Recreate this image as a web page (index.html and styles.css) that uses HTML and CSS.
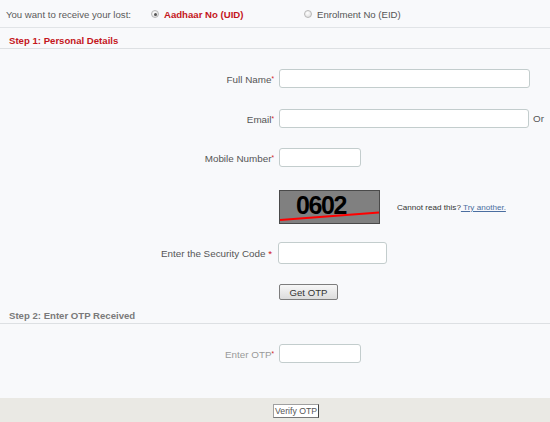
FILE: index.html
```html
<!DOCTYPE html>
<html>
<head>
<meta charset="utf-8">
<link rel="stylesheet" href="styles.css">
</head>
<body>
<div class="topbar">
  <span class="question">You want to receive your lost:</span>
  <span class="option opt-uid"><span class="radio checked"></span><span class="opt-active">Aadhaar No (UID)</span></span>
  <span class="option opt-eid"><span class="radio"></span><span class="opt-text">Enrolment No (EID)</span></span>
</div>

<div class="step step1">Step 1: Personal Details</div>

<div class="form">
  <div class="row r-name">
    <label class="lbl">Full Name<span class="req">*</span></label>
    <input class="field wide" type="text">
  </div>
  <div class="row r-email">
    <label class="lbl">Email<span class="req">*</span></label>
    <div class="with-or"><input class="field wide2" type="text"><span class="or">Or</span></div>
  </div>
  <div class="row r-mobile">
    <label class="lbl">Mobile Number<span class="req">*</span></label>
    <input class="field short" type="text">
  </div>
  <div class="row r-captcha">
    <span></span>
    <div class="captcha-wrap">
      <svg class="captcha" width="101" height="34" viewBox="0 0 101 34">
        <rect x="0.5" y="0.5" width="100" height="33" fill="#808080" stroke="#4a4a4a"/>
        <text x="17" y="24" class="captcha-text">0602</text>
        <line x1="1" y1="30" x2="100" y2="22.5" stroke="#ff0000" stroke-width="2.2"/>
      </svg>
      <span class="cannot">Cannot read this?<a class="try" href="#"> Try another.</a></span>
    </div>
  </div>
  <div class="row r-code">
    <label class="lbl">Enter the Security Code <span class="req-big">*</span></label>
    <input class="field code" type="text">
  </div>
  <div class="row r-btn">
    <span></span>
    <div><button class="btn-otp" type="button">Get OTP</button></div>
  </div>
</div>

<div class="step step2">Step 2: Enter OTP Received</div>

<div class="form">
  <div class="row r-otp">
    <label class="lbl dim">Enter OTP<span class="req">*</span></label>
    <input class="field short" type="text">
  </div>
</div>

<div class="footer">
  <button class="btn-verify" type="button">Verify OTP</button>
</div>
</body>
</html>
```

FILE: styles.css
```css
html, body {
  margin: 0;
  padding: 0;
  background: #f8f9fb;
}
body {
  width: 550px;
  height: 422px;
  overflow: hidden;
  font-family: "Liberation Sans", Arial, sans-serif;
  font-size: 9.6px;
  color: #555;
}

.topbar {
  height: 28px;
  box-sizing: border-box;
  border-bottom: 1px solid #e1e4e7;
  display: flex;
  align-items: center;
  padding-left: 6px;
  padding-top: 1px;
  line-height: 11px;
}
.question { color: #5a5a5a; width: 145px; }
.option { display: flex; align-items: center; }
.opt-uid { width: 153px; }
.opt-active { color: #c4161c; font-weight: bold; margin-left: 5px; }
.opt-text { color: #555; margin-left: 5px; }
.radio {
  width: 8px;
  height: 8px;
  box-sizing: border-box;
  border-radius: 50%;
  border: 1px solid #b8b8b8;
  background: radial-gradient(circle at 40% 35%, #ffffff 0%, #e4e4e4 70%, #cfcfcf 100%);
  position: relative;
}
.radio.checked::after {
  content: "";
  position: absolute;
  left: 1.5px;
  top: 1.5px;
  width: 3px;
  height: 3px;
  border-radius: 50%;
  background: #555;
}

.step {
  font-weight: bold;
  line-height: 11px;
  padding: 7px 9px 2px;
  border-bottom: 1px solid #dde0e3;
}
.step1 { color: #c4161c; }
.step2 { color: #7a7a7a; padding-top: 10px; }

.row {
  display: grid;
  grid-template-columns: 274px auto;
  column-gap: 5px;
  align-items: center;
}
.lbl {
  text-align: right;
  color: #555;
  line-height: 11px;
  font-size: 9.85px;
}
.lbl.dim { color: #999; }
.req {
  color: #d0121a;
  font-size: 6.5px;
  vertical-align: 2px;
}
.req-big { color: #d0121a; }

.field {
  box-sizing: border-box;
  height: 19px;
  border: 1px solid #c3cdcd;
  border-radius: 3px;
  background: #fff;
  margin: 0;
  padding: 0 3px;
}
.wide { width: 251px; }
.wide2 { width: 250px; }
.short { width: 82px; }
.code { width: 109px; height: 22px; margin-left: -1px; }

.with-or { display: flex; align-items: center; }
.or { margin-left: 4px; color: #555; font-size: 9.85px; }

.r-name { margin-top: 20px; }
.r-email { margin-top: 21px; }
.r-mobile { margin-top: 20px; }
.r-captcha { margin-top: 23px; }
.r-code { margin-top: 18px; }
.r-code .lbl { margin-right: 2px; }
.r-btn { margin-top: 20px; }
.r-otp { margin-top: 20px; }

.captcha-wrap { display: flex; align-items: center; }
.captcha { display: block; }
.captcha-text {
  font-family: "Liberation Sans", Arial, sans-serif;
  font-weight: bold;
  font-size: 25px;
  letter-spacing: -1.4px;
  fill: #000;
}
.cannot {
  margin-left: 17px;
  font-size: 8.1px;
  color: #333;
}
.try {
  color: #4b6ea0;
  text-decoration: underline;
}

.btn-otp {
  display: block;
  box-sizing: border-box;
  width: 59px;
  height: 16px;
  margin: 0;
  padding: 0;
  border: 1px solid #7d7d7d;
  border-radius: 2px;
  background: linear-gradient(#f7f7f7, #dcdcdc);
  font-family: "Liberation Sans", Arial, sans-serif;
  font-size: 9.6px;
  color: #333;
}

.footer {
  margin-top: 35px;
  height: 25px;
  box-sizing: border-box;
  background: #eae9e4;
  padding: 6px 0 0 273px;
}
.btn-verify {
  display: block;
  box-sizing: border-box;
  width: 46px;
  height: 14px;
  margin: 0;
  padding: 0;
  background: #fff;
  border: 1px solid #a0a0a0;
  border-right-color: #444;
  border-bottom-color: #777;
  font-family: "Liberation Sans", Arial, sans-serif;
  font-size: 8.7px;
  color: #555;
  line-height: 12px;
}
```
